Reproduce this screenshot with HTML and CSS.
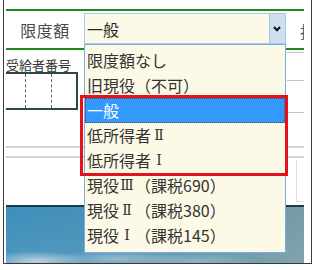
FILE: index.html
```html
<!DOCTYPE html>
<html lang="ja">
<head>
<meta charset="utf-8">
<link rel="stylesheet" href="styles.css">
</head>
<body>
<div class="frame">
  <div class="rule-green"></div>
  <div class="header">
    <div class="label">限度額</div>
    <div class="select">
      <span class="select-value">一般</span>
      <span class="select-btn">
        <svg width="8" height="6" viewBox="0 0 8 6"><polyline points="1,1 4,4.2 7,1" fill="none" stroke="#111" stroke-width="2"/></svg>
      </span>
      <div class="list">
        <div class="opt">限度額なし</div>
        <div class="opt">旧現役（不可）</div>
        <div class="opt selected">一般</div>
        <div class="opt">低所得者<span class="rn">Ⅱ</span></div>
        <div class="opt">低所得者<span class="rn">Ⅰ</span></div>
        <div class="opt">現役<span class="rn">Ⅲ</span>（課税690）</div>
        <div class="opt">現役<span class="rn">Ⅱ</span>（課税380）</div>
        <div class="opt">現役<span class="rn">Ⅰ</span>（課税145）</div>
        <div class="mark"></div>
      </div>
    </div>
    <div class="spacer"></div>
    <div class="clip"><span>担</span></div>
  </div>
  <div class="rule-green"></div>
  <div class="section1">
    <div class="left">
      <div class="small-label">受給者番号</div>
      <div class="idbox">
        <span class="cell"></span>
        <span class="cell dashed"></span>
        <span class="cell dashed"></span>
      </div>
    </div>
    <div class="mid"></div>
    <div class="right">
      <div class="hline l1"></div>
      <div class="hline l2"></div>
      <div class="hline l3"></div>
    </div>
  </div>
  <div class="rule-gray"></div>
  <div class="rule-gray second"></div>
  <div class="section2">
    <div class="mid"></div>
    <div class="right">
      <div class="edge-box"></div>
    </div>
  </div>
  <div class="photo"></div>
</div>
</body>
</html>
```

FILE: styles.css
```css
html, body {
  margin: 0;
  padding: 0;
  background: #ffffff;
}

body {
  font-family: "Noto Sans CJK JP", "Noto Sans", sans-serif;
  color: #333333;
}

.frame {
  position: relative;
  margin-left: 3px;
  width: 309px;
  height: 264px;
  box-sizing: border-box;
  border: 1px solid #3c3c3c;
  border-top: none;
  padding: 9px 7px 0 2px;
  display: flex;
  flex-direction: column;
  background: #ffffff;
}

.rule-green {
  height: 2px;
  background: #1f8a1f;
  flex: none;
}

.header {
  height: 37px;
  display: flex;
  align-items: flex-start;
  flex: none;
}

.label {
  width: 78px;
  height: 37px;
  display: flex;
  align-items: center;
  justify-content: center;
  font-size: 16px;
  letter-spacing: 0.5px;
  color: #4a4a4a;
  line-height: 1;
}

.select {
  position: relative;
  margin-top: 2px;
  width: 202px;
  height: 31px;
  box-sizing: border-box;
  border: 1px solid #a9c9ec;
  background: #fcf9e6;
  display: flex;
  align-items: center;
  z-index: 2;
}

.select-value {
  flex: 1;
  padding-left: 2px;
  font-size: 16px;
  line-height: 1;
  color: #2a2a2a;
}

.select-btn {
  width: 16px;
  height: 100%;
  box-sizing: border-box;
  border-left: 1px solid #a9c9ec;
  background-color: #d8e6f5;
  background-image: radial-gradient(#c2d5ec 0.6px, transparent 0.8px);
  background-size: 2px 2px;
  display: flex;
  align-items: center;
  justify-content: center;
}

.select-btn svg {
  display: block;
  margin-left: -1px;
}

.list {
  position: absolute;
  left: -1px;
  top: 30px;
  width: 202px;
  height: 209px;
  box-sizing: border-box;
  border: 1px solid #78ace2;
  background: #fcf9e6;
  padding-top: 3px;
}

.opt {
  height: 25px;
  line-height: 25px;
  padding-left: 2px;
  font-size: 16px;
  color: #333333;
  white-space: nowrap;
}

.rn {
  display: inline-block;
  width: 16px;
  text-align: center;
  font-family: "DejaVu Serif", "Liberation Serif", serif;
  font-size: 14px;
  vertical-align: top;
}

.opt.selected {
  background: #3399ff;
  color: #ffffff;
  outline: 1px dotted #5a4530;
  outline-offset: -1px;
}

.mark {
  position: absolute;
  left: -5px;
  top: 50px;
  width: 208px;
  height: 81px;
  box-sizing: border-box;
  border: 3px solid #e5121b;
}

.spacer {
  flex: 1;
}

.clip {
  width: 4px;
  height: 37px;
  overflow: hidden;
  display: flex;
  align-items: center;
  font-size: 16px;
  color: #555555;
}

.clip span {
  display: block;
  line-height: 1;
  margin-top: 2px;
}

.section1 {
  height: 96px;
  display: flex;
  flex: none;
}

.left {
  width: 78px;
  flex: none;
}

.small-label {
  margin-top: 8px;
  height: 14px;
  line-height: 14px;
  font-size: 13px;
  color: #333333;
  white-space: nowrap;
}

.idbox {
  width: 72px;
  height: 38px;
  box-sizing: border-box;
  border-top: 2px solid #2e4a44;
  border-right: 2px solid #2e4a44;
  border-bottom: 2px solid #2e4a44;
  display: grid;
  grid-template-columns: 19px 26px 1fr;
}

.cell.dashed {
  border-left: 1px dashed #51706a;
}

.mid {
  flex: 1;
}

.right {
  width: 17px;
  flex: none;
}

.hline {
  height: 1px;
  background: #c4c4c4;
}

.hline.l1 {
  margin-top: 2px;
}

.hline.l2 {
  margin-top: 27px;
}

.hline.l3 {
  margin-top: 31px;
}

.rule-gray {
  height: 2px;
  background: #d2d2d2;
  flex: none;
}

.rule-gray.second {
  margin-top: 8px;
}

.section2 {
  height: 47px;
  display: flex;
  flex: none;
}

.edge-box {
  margin-top: 2px;
  margin-left: 9px;
  height: 42px;
  box-sizing: border-box;
  border-left: 1px solid #dddddd;
  border-bottom: 1px solid #dddddd;
}

.photo {
  height: 58px;
  box-sizing: border-box;
  border-top: 2px solid #1a3a52;
  flex: none;
  background:
    radial-gradient(ellipse 50px 10px at 30px 54px, rgba(215, 225, 230, 0.8), rgba(215, 225, 230, 0)),
    radial-gradient(ellipse 70px 8px at 110px 52px, rgba(200, 214, 222, 0.55), rgba(200, 214, 222, 0)),
    radial-gradient(ellipse 60px 8px at 190px 54px, rgba(190, 205, 212, 0.45), rgba(190, 205, 212, 0)),
    linear-gradient(180deg, rgba(255, 255, 255, 0) 0%, rgba(255, 255, 255, 0.08) 100%),
    linear-gradient(90deg, #3d8fbc 0%, #4a90b5 35%, #6395a7 72%, #789ba6 100%);
}
```
